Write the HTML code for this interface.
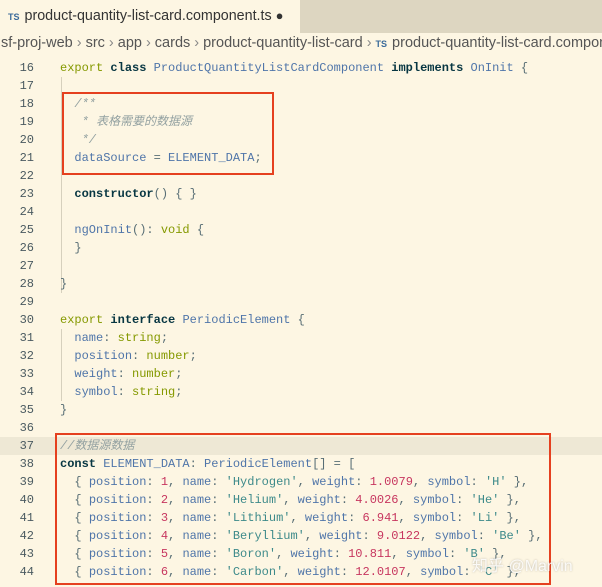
<!DOCTYPE html>
<html><head><meta charset="utf-8"><style>
*{margin:0;padding:0;box-sizing:border-box}
html,body{width:602px;height:587px;overflow:hidden}
body{background:#fdf6e3;font-family:"Liberation Sans","Noto Sans CJK SC",sans-serif;position:relative}
.tabbar{position:absolute;left:0;top:0;width:602px;height:33px;background:#ddd6c1}
.tab{position:absolute;left:0;top:0;width:300px;height:33px;background:#fdf6e3;font-size:14.3px;color:#333;line-height:31px;padding-left:8px;white-space:nowrap}
.ts{font-size:9px;color:#3a6a9a;font-weight:bold;margin-right:5px}
.bc{position:absolute;left:0;top:32px;height:22px;width:602px;font-size:14.5px;color:#555;line-height:22px;padding-left:1px;white-space:nowrap;overflow:hidden}
.bc .s{color:#888;margin:0 4px}
.code{position:absolute;left:0;top:59px;font-family:"Liberation Mono","Noto Sans CJK SC",monospace;font-size:12px}
.l{height:18px;line-height:18px;position:relative;color:#586e75;white-space:pre}
.n{display:inline-block;width:34px;text-align:right;color:#4a5a60;margin-right:26px}
.k{color:#859900}.b{color:#073642;font-weight:bold}.c{color:#4f75a9}.p{color:#4f75a9}
.num{color:#c7365f}.str{color:#3d8a8a}.cm{color:#93a1a1;font-style:italic}
.hl{background:#eee8d5}
.box{position:absolute;border:2.5px solid #e5401f}
.guide{position:absolute;width:1px;background:#d6d0bd}
.wm{position:absolute;left:472px;top:552px;font-size:16px;color:rgba(255,255,255,.85);text-shadow:0 0 2px rgba(0,0,0,.25)}
</style></head><body>
<div class="tabbar"><div class="tab"><span class="ts">TS</span>product-quantity-list-card.component.ts <span style="font-size:13px">●</span></div></div>
<div class="bc">sf-proj-web<span class="s">›</span>src<span class="s">›</span>app<span class="s">›</span>cards<span class="s">›</span>product-quantity-list-card<span class="s">›</span><span class="ts">TS</span>product-quantity-list-card.component.ts</div>
<div class="guide" style="left:61px;top:77px;height:216px"></div>
<div class="guide" style="left:61px;top:329px;height:72px"></div>
<div class="code"><div class="l"><span class="n">16</span><span class="k">export</span> <span class="b">class</span> <span class="c">ProductQuantityListCardComponent</span> <span class="b">implements</span> <span class="c">OnInit</span> {</div><div class="l"><span class="n">17</span></div><div class="l"><span class="n">18</span>  <span class="cm">/**</span></div><div class="l"><span class="n">19</span>  <span class="cm"> * 表格需要的数据源</span></div><div class="l"><span class="n">20</span>  <span class="cm"> */</span></div><div class="l"><span class="n">21</span>  <span class="p">dataSource</span> = <span class="c">ELEMENT_DATA</span>;</div><div class="l"><span class="n">22</span></div><div class="l"><span class="n">23</span>  <span class="b">constructor</span>() { }</div><div class="l"><span class="n">24</span></div><div class="l"><span class="n">25</span>  <span class="p">ngOnInit</span>(): <span class="k">void</span> {</div><div class="l"><span class="n">26</span>  }</div><div class="l"><span class="n">27</span></div><div class="l"><span class="n">28</span>}</div><div class="l"><span class="n">29</span></div><div class="l"><span class="n">30</span><span class="k">export</span> <span class="b">interface</span> <span class="c">PeriodicElement</span> {</div><div class="l"><span class="n">31</span>  <span class="p">name</span>: <span class="k">string</span>;</div><div class="l"><span class="n">32</span>  <span class="p">position</span>: <span class="k">number</span>;</div><div class="l"><span class="n">33</span>  <span class="p">weight</span>: <span class="k">number</span>;</div><div class="l"><span class="n">34</span>  <span class="p">symbol</span>: <span class="k">string</span>;</div><div class="l"><span class="n">35</span>}</div><div class="l"><span class="n">36</span></div><div class="l hl" style="width:602px"><span class="n">37</span><span class="cm">//数据源数据</span></div><div class="l"><span class="n">38</span><span class="b">const</span> <span class="c">ELEMENT_DATA</span>: <span class="c">PeriodicElement</span>[] = [</div><div class="l"><span class="n">39</span>  { <span class="p">position</span>: <span class="num">1</span>, <span class="p">name</span>: <span class="str">'Hydrogen'</span>, <span class="p">weight</span>: <span class="num">1.0079</span>, <span class="p">symbol</span>: <span class="str">'H'</span> },</div><div class="l"><span class="n">40</span>  { <span class="p">position</span>: <span class="num">2</span>, <span class="p">name</span>: <span class="str">'Helium'</span>, <span class="p">weight</span>: <span class="num">4.0026</span>, <span class="p">symbol</span>: <span class="str">'He'</span> },</div><div class="l"><span class="n">41</span>  { <span class="p">position</span>: <span class="num">3</span>, <span class="p">name</span>: <span class="str">'Lithium'</span>, <span class="p">weight</span>: <span class="num">6.941</span>, <span class="p">symbol</span>: <span class="str">'Li'</span> },</div><div class="l"><span class="n">42</span>  { <span class="p">position</span>: <span class="num">4</span>, <span class="p">name</span>: <span class="str">'Beryllium'</span>, <span class="p">weight</span>: <span class="num">9.0122</span>, <span class="p">symbol</span>: <span class="str">'Be'</span> },</div><div class="l"><span class="n">43</span>  { <span class="p">position</span>: <span class="num">5</span>, <span class="p">name</span>: <span class="str">'Boron'</span>, <span class="p">weight</span>: <span class="num">10.811</span>, <span class="p">symbol</span>: <span class="str">'B'</span> },</div><div class="l"><span class="n">44</span>  { <span class="p">position</span>: <span class="num">6</span>, <span class="p">name</span>: <span class="str">'Carbon'</span>, <span class="p">weight</span>: <span class="num">12.0107</span>, <span class="p">symbol</span>: <span class="str">'C'</span> },</div></div>
<div class="box" style="left:62px;top:92px;width:212px;height:83px"></div>
<div class="box" style="left:55px;top:433px;width:496px;height:152px"></div>
<div class="wm">知乎 @Marvin</div>
</body></html>
